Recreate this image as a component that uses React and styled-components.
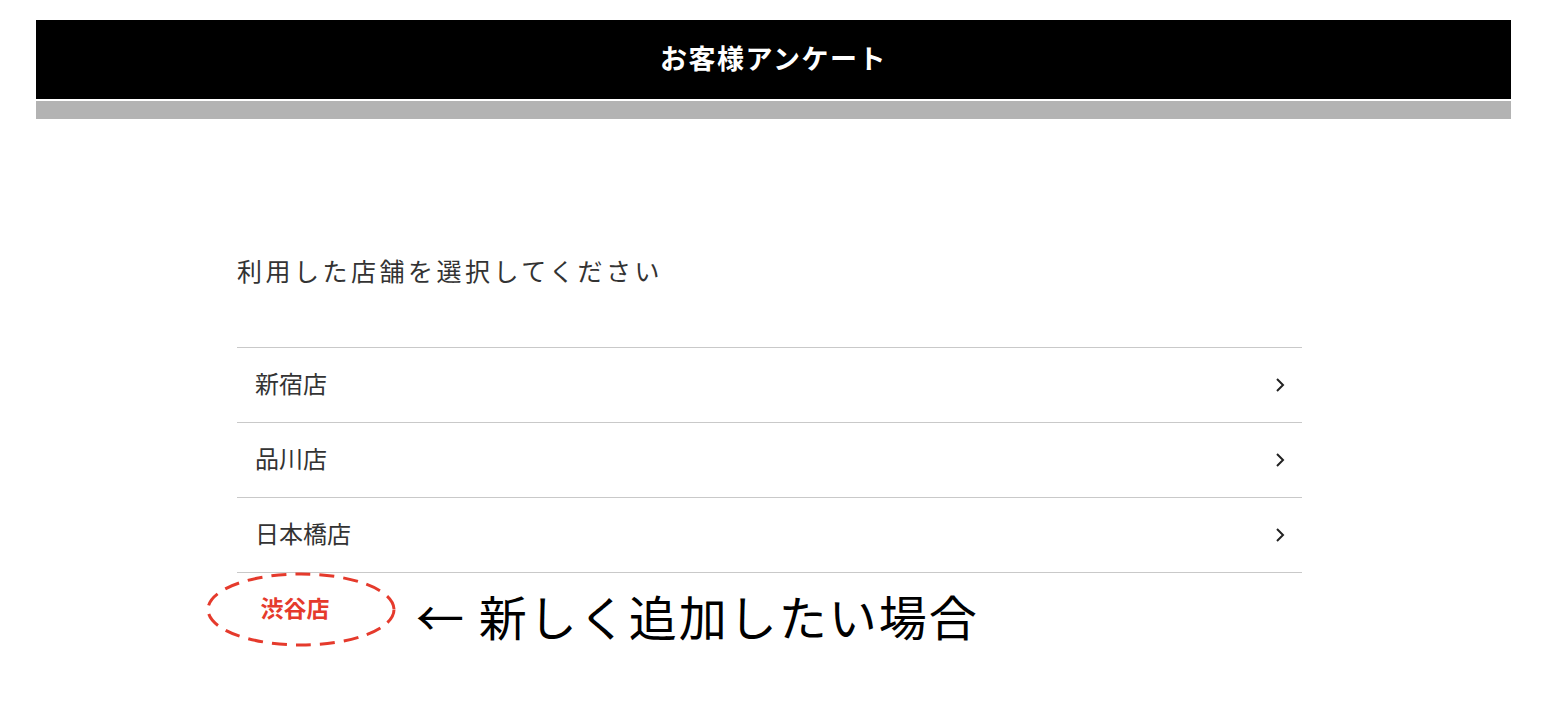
import styled, { createGlobalStyle } from 'styled-components'

const GlobalStyle = createGlobalStyle`
  body {
    margin: 0;
    background: #fff;
    font-family: "Noto Sans CJK JP", "Noto Sans", sans-serif;
  }
`

const Page = styled.div`
  margin: 20px 57px 0 36px;
`
const Header = styled.header`
  height: 79px;
  padding-bottom: 4px;
  box-sizing: border-box;
  background: #000;
  display: flex;
  align-items: center;
  justify-content: center;
`
const Title = styled.h1`
  margin: 0;
  color: #fff;
  font-size: 27px;
  line-height: 1;
  font-weight: bold;
  letter-spacing: 1.5px;
`
const SubBar = styled.div`
  height: 18px;
  margin-top: 2px;
  background: #b3b3b3;
`
const Content = styled.main`
  width: 1065px;
  margin: 133px 0 0 201px;
`
const Prompt = styled.p`
  margin: 0 0 59px;
  font-size: 25px;
  line-height: 36px;
  letter-spacing: 3.5px;
  color: #333;
`
const List = styled.ul`
  list-style: none;
  margin: 0;
  padding: 0;
  border-top: 1px solid #c9c9c9;
`
const Row = styled.li`
  height: 75px;
  box-sizing: border-box;
  border-bottom: 1px solid #c9c9c9;
  display: flex;
  align-items: center;
  justify-content: space-between;
  padding: 0 16px 4px 18px;
  font-size: 24px;
  line-height: 1;
  color: #333;
  svg {
    margin-top: 3px;
  }
`
const Chevron = () => (
  <svg width="12" height="16" viewBox="0 0 12 16">
    <path d="M3 2 L9 8 L3 14" fill="none" stroke="#222" strokeWidth="2" />
  </svg>
)
const Annotation = styled.div`
  display: flex;
  align-items: center;
  margin: -1px 0 0 -31px;
`
const Oval = styled.div`
  position: relative;
  width: 190px;
  height: 75px;
  display: flex;
  align-items: center;
  justify-content: center;
  svg {
    position: absolute;
    inset: 0;
  }
`
const NewStore = styled.span`
  color: #e53a2c;
  font-size: 23px;
  line-height: 1;
  font-weight: bold;
  margin: 0 12px 4px 0;
`
const Note = styled.span`
  margin: 10px 0 0 20px;
  font-size: 48px;
  line-height: 1;
  letter-spacing: 2px;
  color: #000;
`

const stores = ['新宿店', '品川店', '日本橋店']

export default function App() {
  return (
    <Page>
      <GlobalStyle />
      <Header>
        <Title>お客様アンケート</Title>
      </Header>
      <SubBar />
      <Content>
        <Prompt>利用した店舗を選択してください</Prompt>
        <List>
          {stores.map((s) => (
            <Row key={s}>
              {s}
              <Chevron />
            </Row>
          ))}
        </List>
        <Annotation>
          <Oval>
            <svg width="190" height="75" viewBox="0 0 190 75">
              <ellipse cx="95" cy="37.5" rx="93" ry="35.5" fill="none" stroke="#e53a2c" strokeWidth="3" strokeDasharray="15 9" />
            </svg>
            <NewStore>渋谷店</NewStore>
          </Oval>
          <Note>← 新しく追加したい場合</Note>
        </Annotation>
      </Content>
    </Page>
  )
}
